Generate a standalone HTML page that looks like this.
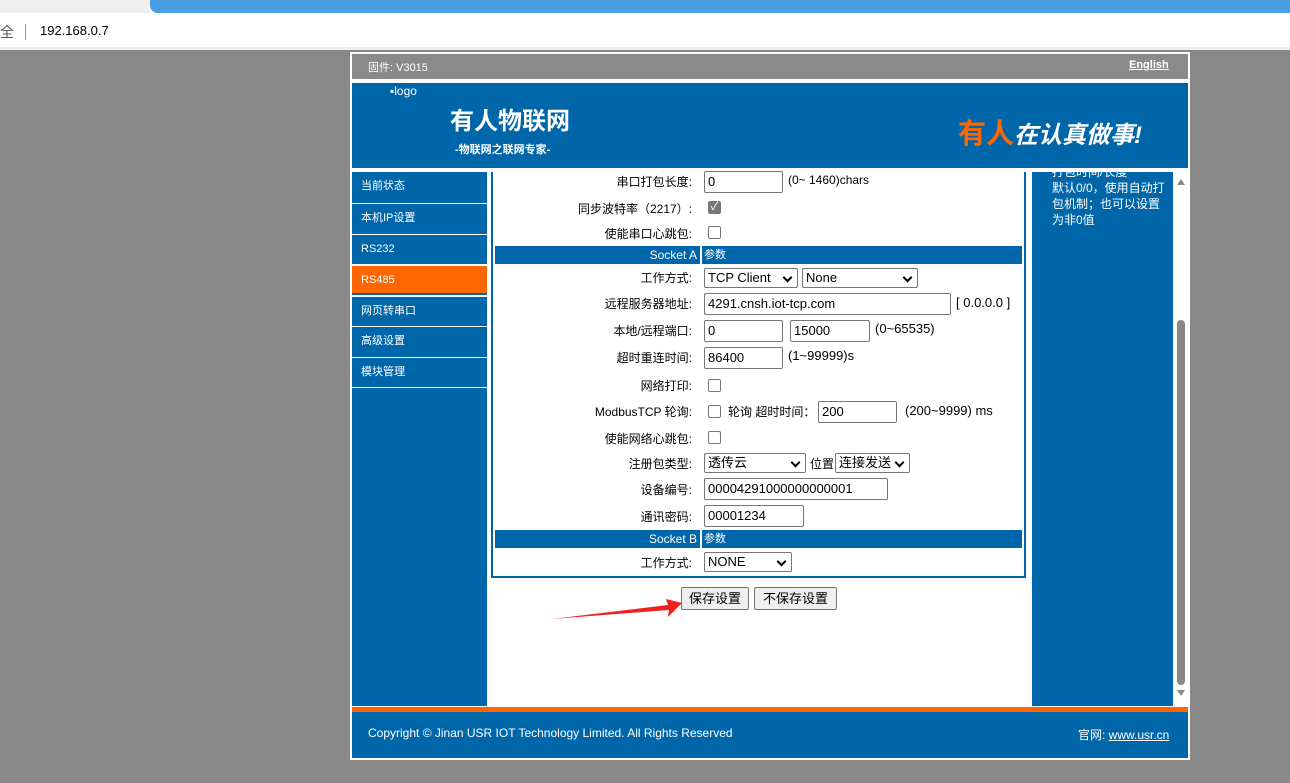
<!DOCTYPE html>
<html><head><meta charset="utf-8"><style>
*{margin:0;padding:0;box-sizing:border-box}
body{width:1290px;height:783px;background:#888;position:relative;overflow:hidden;font-family:"Liberation Sans","Noto Sans CJK SC",sans-serif;font-size:12px;color:#000}
.a{position:absolute}
.w{color:#fff}
.inp{position:absolute;height:22px;border:1px solid #767676;background:#fff;font-size:13px;padding:2px 3px;line-height:16px;border-radius:2px}
.sel{position:absolute;height:20px;border:1px solid #767676;background:#fff;font-size:13px;padding:1px 3px;line-height:16px;border-radius:2px}
.sel:after{content:"";position:absolute;right:6px;top:5px;width:5px;height:5px;border-right:2px solid #000;border-bottom:2px solid #000;transform:rotate(45deg)}
.cb{position:absolute;width:13px;height:13px;border:1px solid #767676;border-radius:2px;background:#fff}
.nav{position:absolute;left:352px;width:135px;height:29px;background:#0066aa;color:#fff;font-size:11px;padding-left:9px;line-height:29px}
.t{position:absolute;font-size:12px}
.l{position:absolute;left:495px;width:197px;text-align:right;font-size:12px}
</style></head><body>
<div class="a" style="left:0;top:0;width:1290px;height:13px;background:#f0f0f0"></div>
<div class="a" style="left:150px;top:0;width:1140px;height:13px;background:#4a9fe3;border-radius:0 0 0 8px"></div>
<div class="a" style="left:0;top:13px;width:1290px;height:35px;background:#fff"></div>
<div class="a" style="left:0;top:22px;font-size:14px;color:#555">全</div>
<div class="a" style="left:25px;top:24px;width:1px;height:16px;background:#999"></div>
<div class="a" style="left:40px;top:23px;font-size:13px">192.168.0.7</div>
<div class="a" style="left:0;top:47px;width:1290px;height:3px;background:#eee"></div>

<div class="a" style="left:350px;top:52px;width:840px;height:708px;background:#fff"></div>
<div class="a" style="left:352px;top:54px;width:836px;height:25px;background:#8a8a8a"></div>
<div class="a w" style="left:368px;top:59px;font-size:11px">固件: V3015</div>
<div class="a w" style="left:1129px;top:59px;font-size:11px;text-decoration:underline;font-weight:bold">English</div>
<div class="a" style="left:352px;top:83px;width:836px;height:85px;background:#0066aa"></div>
<div class="a w" style="left:390px;top:84px;font-size:12px">▪logo</div>
<div class="a w" style="left:450px;top:101px;font-size:24px;font-weight:bold">有人物联网</div>
<div class="a w" style="left:455px;top:141px;font-size:11px;font-weight:bold">-物联网之联网专家-</div>
<div class="a" style="left:958px;top:112px;font-size:28px;font-weight:bold;color:#ff6600">有人<span style="color:#fff;font-size:24px;font-style:italic">在认真做事!</span></div>

<div class="a" style="left:352px;top:172px;width:135px;height:534px;background:#0066aa"></div>
<div class="nav" style="top:172px">当前状态</div>
<div class="nav" style="top:203px;border-top:1px solid #fff">本机IP设置</div>
<div class="nav" style="top:234px;border-top:1px solid #fff">RS232</div>
<div class="nav" style="top:264px;background:#ff6600;border-top:2px solid #fff">RS485</div>
<div class="nav" style="top:295px;border-top:2px solid #fff">网页转串口</div>
<div class="nav" style="top:326px;border-top:1px solid #fff">高级设置</div>
<div class="nav" style="top:357px;border-top:1px solid #fff">模块管理</div>
<div class="a" style="left:352px;top:387px;width:135px;height:1px;background:#fff"></div>

<div class="a" style="left:491px;top:172px;width:535px;height:406px;border:2px solid #0066aa;border-top:none"></div>
<div class="a" style="left:1032px;top:172px;width:141px;height:534px;background:#0066aa;overflow:hidden">
<div class="a w" style="left:20px;top:-8px;font-size:12px;line-height:16px;width:115px">打包时间/长度<br>默认0/0，使用自动打包机制；也可以设置为非0值</div></div>
<div class="a" style="left:1175px;top:172px;width:13px;height:534px;background:#fff"></div>
<div class="a" style="left:1177px;top:320px;width:8px;height:365px;background:#888;border-radius:4px"></div>
<div class="a" style="left:1177px;top:179px;width:0;height:0;border-left:4px solid transparent;border-right:4px solid transparent;border-bottom:6px solid #888"></div>
<div class="a" style="left:1177px;top:690px;width:0;height:0;border-left:4px solid transparent;border-right:4px solid transparent;border-top:6px solid #888"></div>

<div class="l" style="top:173px">串口打包长度:</div>
<div class="inp" style="left:704px;top:171px;width:79px">0</div>
<div class="t" style="left:788px;top:173px">(0~ 1460)chars</div>
<div class="l" style="top:200px">同步波特率（2217）:</div>
<div class="cb" style="left:708px;top:201px;background:#777;border-color:#777;color:#fff;font-size:11px;line-height:11px;text-align:center">✓</div>
<div class="l" style="top:225px">使能串口心跳包:</div>
<div class="cb" style="left:708px;top:226px"></div>
<div class="a" style="left:495px;top:246px;width:205px;height:18px;background:#0066aa;color:#fff;text-align:right;padding-right:3px;line-height:18px;font-size:12px">Socket A</div>
<div class="a" style="left:702px;top:246px;width:320px;height:18px;background:#0066aa;color:#fff;padding-left:2px;line-height:18px;font-size:11px">参数</div>
<div class="l" style="top:269px">工作方式:</div>
<div class="sel" style="left:704px;top:268px;width:94px">TCP Client</div>
<div class="sel" style="left:802px;top:268px;width:116px">None</div>
<div class="l" style="top:295px">远程服务器地址:</div>
<div class="inp" style="left:704px;top:293px;width:247px">4291.cnsh.iot-tcp.com</div>
<div class="t" style="left:956px;top:295px;font-size:13px">[ 0.0.0.0 ]</div>
<div class="l" style="top:322px">本地/远程端口:</div>
<div class="inp" style="left:704px;top:320px;width:79px">0</div>
<div class="inp" style="left:790px;top:320px;width:80px">15000</div>
<div class="t" style="left:875px;top:321px;font-size:13px">(0~65535)</div>
<div class="l" style="top:349px">超时重连时间:</div>
<div class="inp" style="left:704px;top:347px;width:79px">86400</div>
<div class="t" style="left:788px;top:348px;font-size:13px">(1~99999)s</div>
<div class="l" style="top:377px">网络打印:</div>
<div class="cb" style="left:708px;top:379px"></div>
<div class="l" style="top:403px">ModbusTCP 轮询:</div>
<div class="cb" style="left:708px;top:405px"></div>
<div class="t" style="left:728px;top:403px">轮询 超时时间：</div>
<div class="inp" style="left:818px;top:401px;width:79px">200</div>
<div class="t" style="left:905px;top:403px;font-size:13px">(200~9999) ms</div>
<div class="l" style="top:430px">使能网络心跳包:</div>
<div class="cb" style="left:708px;top:431px"></div>
<div class="l" style="top:455px">注册包类型:</div>
<div class="sel" style="left:704px;top:453px;width:102px">透传云</div>
<div class="t" style="left:810px;top:455px">位置</div>
<div class="sel" style="left:835px;top:453px;width:75px">连接发送</div>
<div class="l" style="top:481px">设备编号:</div>
<div class="inp" style="left:704px;top:478px;width:184px">00004291000000000001</div>
<div class="l" style="top:508px">通讯密码:</div>
<div class="inp" style="left:704px;top:505px;width:100px">00001234</div>
<div class="a" style="left:495px;top:530px;width:205px;height:18px;background:#0066aa;color:#fff;text-align:right;padding-right:3px;line-height:18px;font-size:12px">Socket B</div>
<div class="a" style="left:702px;top:530px;width:320px;height:18px;background:#0066aa;color:#fff;padding-left:2px;line-height:18px;font-size:11px">参数</div>
<div class="l" style="top:554px">工作方式:</div>
<div class="sel" style="left:704px;top:552px;width:88px">NONE</div>

<div class="a" style="left:681px;top:587px;width:68px;height:23px;background:#efefef;border:1px solid #767676;border-radius:2px;text-align:center;line-height:21px;font-size:13px">保存设置</div>
<div class="a" style="left:754px;top:587px;width:83px;height:23px;background:#efefef;border:1px solid #767676;border-radius:2px;text-align:center;line-height:21px;font-size:13px">不保存设置</div>
<svg class="a" style="left:550px;top:595px" width="135" height="30"><polygon points="2,24 118,10 116,4 132,8 118,22 119,15" fill="#f02020"/></svg>

<div class="a" style="left:352px;top:707px;width:836px;height:5px;background:#ff6600"></div>
<div class="a" style="left:352px;top:712px;width:836px;height:46px;background:#0066aa"></div>
<div class="a w" style="left:368px;top:726px;font-size:12px">Copyright © Jinan USR IOT Technology Limited. All Rights Reserved</div>
<div class="a w" style="left:1078px;top:726px;font-size:12px">官网: <u>www.usr.cn</u></div>
</body></html>
